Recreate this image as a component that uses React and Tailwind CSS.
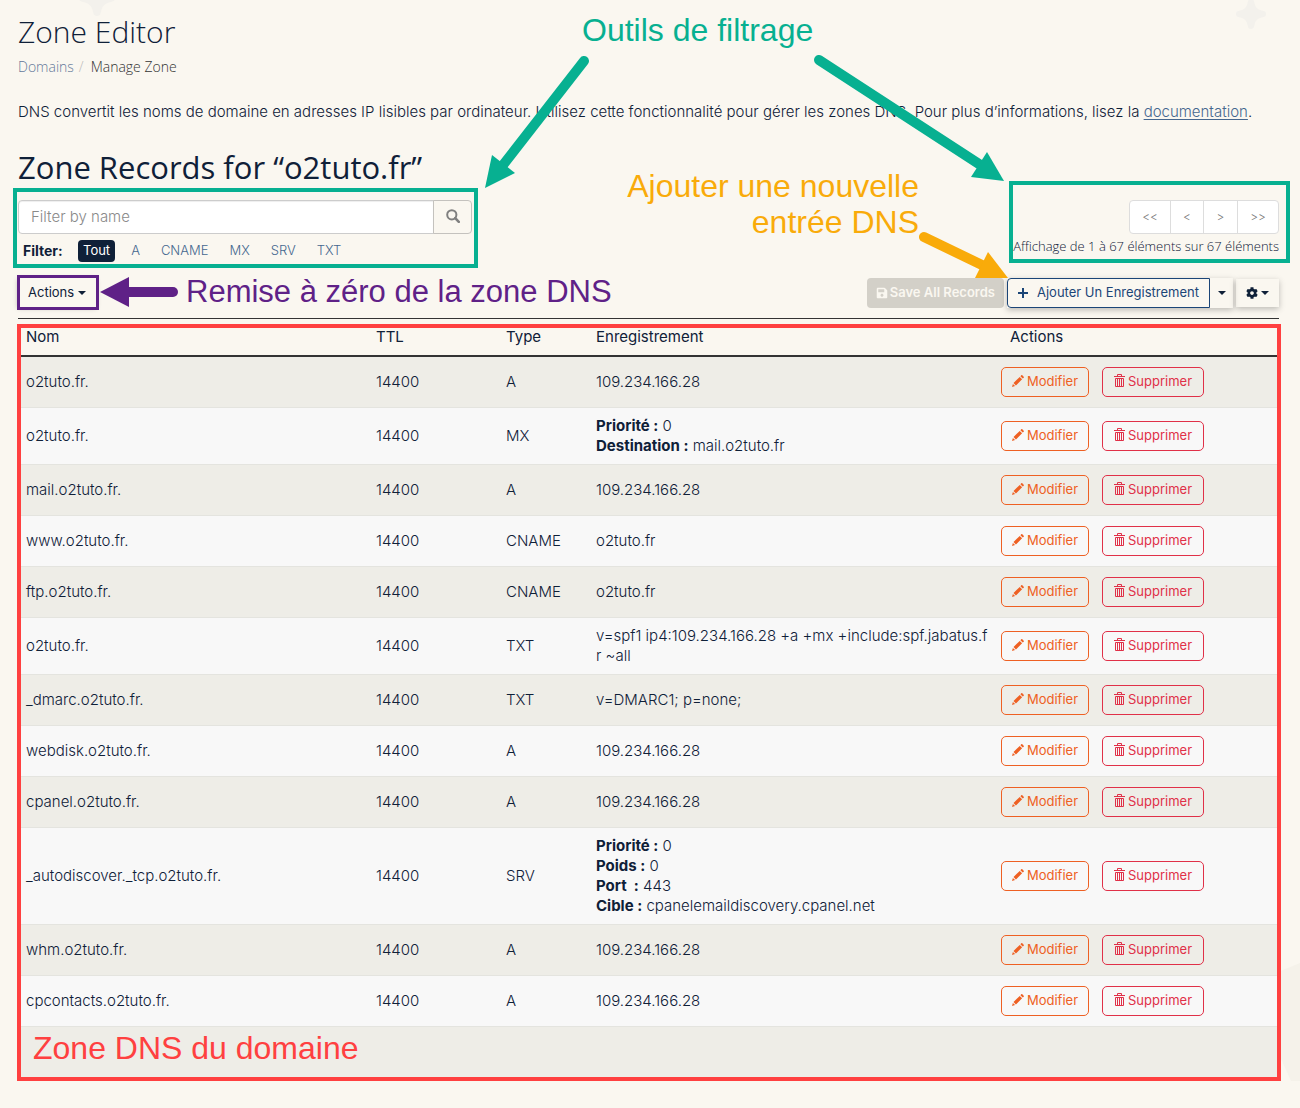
import { FaCog, FaSave } from "react-icons/fa";

const RECORDS = [
  { name: "o2tuto.fr.", type: "A", value: "109.234.166.28" },
  {
    name: "o2tuto.fr.",
    type: "MX",
    fields: [
      ["Priorité :", "0"],
      ["Destination :", "mail.o2tuto.fr"],
    ],
  },
  { name: "mail.o2tuto.fr.", type: "A", value: "109.234.166.28" },
  { name: "www.o2tuto.fr.", type: "CNAME", value: "o2tuto.fr" },
  { name: "ftp.o2tuto.fr.", type: "CNAME", value: "o2tuto.fr" },
  {
    name: "o2tuto.fr.",
    type: "TXT",
    lines: ["v=spf1 ip4:109.234.166.28 +a +mx +include:spf.jabatus.f", "r ~all"],
  },
  { name: "_dmarc.o2tuto.fr.", type: "TXT", value: "v=DMARC1; p=none;" },
  { name: "webdisk.o2tuto.fr.", type: "A", value: "109.234.166.28" },
  { name: "cpanel.o2tuto.fr.", type: "A", value: "109.234.166.28" },
  {
    name: "_autodiscover._tcp.o2tuto.fr.",
    type: "SRV",
    fields: [
      ["Priorité :", "0"],
      ["Poids :", "0"],
      ["Port\u00a0 :", "443"],
      ["Cible :", "cpanelemaildiscovery.cpanel.net"],
    ],
  },
  { name: "whm.o2tuto.fr.", type: "A", value: "109.234.166.28" },
  { name: "cpcontacts.o2tuto.fr.", type: "A", value: "109.234.166.28" },
];

const Caret = () => (
  <svg className="h-1 w-2" viewBox="0 0 8 4" fill="currentColor" aria-hidden="true">
    <path d="M0 0h8L4 4z" />
  </svg>
);

const PencilIcon = () => (
  <svg className="h-3 w-3" viewBox="0 0 12 12" fill="currentColor" aria-hidden="true">
    <path d="M0 12l.9-3.1 2.2 2.200zM1.500 8.100l6.200-6.200 2.400 2.400-6.200 6.200zM8.400 1.200L9.300.300c.3-.3.7-.3 1 0l1.400 1.400c.3.3.3.7 0 1L10.800 3.600z" />
  </svg>
);

const TrashIcon = () => (
  <svg className="mb-0.5 h-[13px] w-[11px]" viewBox="0 0 11 13" fill="none" stroke="currentColor" aria-hidden="true">
    <path d="M3.5 2.5v-2h4v2M0 2.5h11M1.5 4.5v8h8v-8z" />
    <path d="M3.5 4.5v8M5.5 4.5v8M7.5 4.5v8" />
  </svg>
);

const SearchIcon = () => (
  <svg className="h-[14px] w-[14px]" viewBox="0 0 14 14" fill="none" stroke="currentColor" aria-hidden="true">
    <circle cx="5.8" cy="5.8" r="4.6" strokeWidth="2" />
    <path d="M9.2 9.2l3.6 3.6" strokeWidth="2.6" strokeLinecap="round" />
  </svg>
);

const PlusIcon = () => (
  <svg className="h-[10px] w-[10px]" viewBox="0 0 10 10" fill="none" stroke="currentColor" strokeWidth="2" aria-hidden="true">
    <path d="M5 0v10M0 5h10" />
  </svg>
);

const Star = ({ className }) => (
  <svg className={className} viewBox="-16 -16 32 32" fill="#f3f1ec" aria-hidden="true">
    <path d="M0-16c2 0 3 1 3.500 3.500C4.500-7 7-4.500 12.500-3.500 15-3 16-2 16 0s-1 3-3.500 3.500C7 4.500 4.500 7 3.500 12.500 3 15 2 16 0 16s-3-1-3.500-3.500C-4.500 7-7 4.500-12.500 3.500-15 3-16 2-16 0s1-3 3.500-3.500C-7-4.500-4.500-7-3.500-12.500-3-15-2-16 0-16z" />
  </svg>
);

function RecordValue({ record }) {
  if (record.fields) {
    return record.fields.map(([label, value]) => (
      <div key={label}>
        <strong className="font-bold">{label}</strong> {value}
      </div>
    ));
  }
  if (record.lines) {
    return record.lines.map((line) => (
      <div key={line} className="whitespace-nowrap">
        {line}
      </div>
    ));
  }
  return record.value;
}

function FilterBar() {
  return (
    <div className="relative w-[454px]">
      <div className="flex h-[34px]">
        <input
          type="text"
          aria-label="Filter by name"
          placeholder="Filter by name"
          className="min-w-0 flex-1 rounded-l border border-[#cccccc] bg-white px-3 text-[15px] font-light shadow-[inset_0_1px_1px_rgba(0,0,0,0.07)] outline-none placeholder:text-[#8a8a8a]"
        />
        <button
          type="button"
          aria-label="Search"
          className="-ml-px flex w-[39px] items-center justify-center rounded-r border border-[#c4c2be] pb-0.5 text-[#808080]"
        >
          <SearchIcon />
        </button>
      </div>
      <div className="mt-1.5 flex h-[22px] items-center pl-[5px] text-[13px] font-light text-[#45678f]">
        <span className="w-[55px] text-sm font-bold text-[#0f2038]">Filter:</span>
        <div className="flex gap-[11px]">
          <button type="button" className="h-[22px] rounded bg-[#0f2038] px-[5px] font-normal text-white">
            Tout
          </button>
          {["A", "CNAME", "MX", "SRV", "TXT"].map((type) => (
            <button key={type} type="button" className="h-[22px] px-[5px]">
              {type}
            </button>
          ))}
        </div>
      </div>
      <div className="pointer-events-none absolute -top-3 -right-1.5 -bottom-1.5 -left-[5px] border-4 border-[#07b091]" />
    </div>
  );
}

function Pagination() {
  return (
    <div className="relative flex flex-col items-end">
      <nav
        aria-label="Pagination"
        className="flex h-[34px] divide-x divide-[#dddddd] overflow-hidden rounded border border-[#dddddd] bg-white text-xs font-light text-[#777777]"
      >
        <button type="button" className="w-[41px]">&lt;&lt;</button>
        <button type="button" className="w-[33px]">&lt;</button>
        <button type="button" className="w-[34px]">&gt;</button>
        <button type="button" className="w-10">&gt;&gt;</button>
      </nav>
      <p className="mt-0.5 font-['Open_Sans',sans-serif] text-[13px] leading-5 font-light whitespace-nowrap">
        Affichage de 1 à 67 éléments sur 67 éléments
      </p>
      <div className="pointer-events-none absolute -top-[19px] -right-[11px] -bottom-[7px] -left-1 border-4 border-[#07b091]" />
    </div>
  );
}

function Toolbar() {
  return (
    <div className="mt-4 flex items-start justify-between text-[13px]">
      <div className="relative">
        <button
          type="button"
          className="flex h-[29px] items-center gap-1 px-2.5 shadow-[0_1px_5px_rgba(0,0,0,0.3)]"
        >
          Actions <Caret />
        </button>
        <div className="pointer-events-none absolute -top-[3px] -right-[3px] -bottom-[3px] -left-px border-[3px] border-[#5f2187]" />
      </div>
      <div className="flex items-center gap-[3px]">
        <button
          type="button"
          disabled
          className="flex h-[30px] items-center gap-0.5 rounded bg-[#d3d0c8] px-[9px] font-semibold text-[#faf7f0]"
        >
          <FaSave className="h-3 w-3" />
          Save All Records
        </button>
        <div className="flex h-[30px] shadow-[0_2px_6px_rgba(0,0,0,0.25)]">
          <button
            type="button"
            className="flex items-center gap-[9px] rounded-l border border-[#1b4577] px-2.5 text-[#1b4577]"
          >
            <PlusIcon />
            Ajouter Un Enregistrement
          </button>
          <button type="button" aria-label="More options" className="flex w-[23px] items-center justify-center">
            <Caret />
          </button>
        </div>
        <button
          type="button"
          aria-label="Settings"
          className="flex h-7 w-[43px] items-center justify-center gap-[3px] shadow-[0_2px_6px_rgba(0,0,0,0.25)]"
        >
          <FaCog className="h-3 w-3" />
          <Caret />
        </button>
      </div>
    </div>
  );
}

function RecordsTable() {
  return (
    <div className="relative mt-2.5 border-t border-[#333333]">
      <table className="w-full table-fixed border-separate border-spacing-0 text-left leading-5">
        <colgroup>
          <col className="w-[350px]" />
          <col className="w-[130px]" />
          <col className="w-[90px]" />
          <col />
          <col className="w-[286px]" />
        </colgroup>
        <thead>
          <tr className="[&>th]:border-b-2 [&>th]:border-[#333333] [&>th]:p-2 [&>th]:font-normal">
            <th>Nom</th>
            <th>TTL</th>
            <th>Type</th>
            <th>Enregistrement</th>
            <th>
              <span className="pl-[9px]">Actions</span>
            </th>
          </tr>
        </thead>
        <tbody className="font-light">
          {RECORDS.map((record, i) => (
            <tr
              key={i}
              className="odd:bg-[#eeede7] even:bg-[#f8f8f8] [&>td]:border-b [&>td]:border-[#e4e4df] [&>td]:p-2"
            >
              <td>{record.name}</td>
              <td>14400</td>
              <td>{record.type}</td>
              <td>
                <RecordValue record={record} />
              </td>
              <td>
                <div className="flex h-[34px] items-center gap-[13px] text-[13px] font-normal">
                  <button
                    type="button"
                    className="flex h-[30px] w-[88px] items-center justify-center gap-[3px] rounded-[5px] border border-[#ee6023] pb-0.5 text-[#ee6023]"
                  >
                    <PencilIcon />
                    Modifier
                  </button>
                  <button
                    type="button"
                    className="flex h-[30px] w-[102px] items-center justify-center gap-[3px] rounded-[5px] border border-[#e03048] pb-0.5 text-[#e03048]"
                  >
                    <TrashIcon />
                    Supprimer
                  </button>
                </div>
              </td>
            </tr>
          ))}
          <tr className="bg-[#eeede7]">
            <td colSpan={5} className="h-[51px]" />
          </tr>
        </tbody>
      </table>
      <div className="pointer-events-none absolute top-[5px] -right-0.5 -bottom-[3px] -left-px border-4 border-[#ff4040]" />
      <p className="absolute bottom-3 left-[15px] font-['Liberation_Sans',sans-serif] text-[32px] leading-9 text-[#ff4040]">
        Zone DNS du domaine
      </p>
    </div>
  );
}

function Callouts() {
  return (
    <div className="pointer-events-none absolute inset-0 font-['Liberation_Sans',sans-serif] text-[32px] leading-9">
      <p className="absolute top-3 left-[582px] whitespace-nowrap text-[#07b091]">Outils de filtrage</p>
      <p className="absolute top-[168px] right-[381px] text-right whitespace-nowrap text-[#f9ab0a]">
        Ajouter une nouvelle
        <br />
        entrée DNS
      </p>
      <p className="absolute top-[274px] left-[186px] text-[31px] whitespace-nowrap text-[#5f2187]">
        Remise à zéro de la zone DNS
      </p>
      <svg className="absolute top-0 left-0 h-[320px] w-[620px]" viewBox="0 0 620 320" aria-hidden="true">
        <path d="M584 61L503 165" stroke="#07b091" strokeWidth="10" strokeLinecap="round" />
        <path d="M485 188l7-33 23 18z" fill="#07b091" />
        <path d="M173 292h-46" stroke="#5f2187" strokeWidth="10" strokeLinecap="round" />
        <path d="M100 292l29-15v30z" fill="#5f2187" />
      </svg>
      <svg className="absolute top-0 right-0 h-[320px] w-[500px]" viewBox="800 0 500 320" aria-hidden="true">
        <path d="M819 60l160 104" stroke="#07b091" strokeWidth="10" strokeLinecap="round" />
        <path d="M1004 181l-17-29-16 25z" fill="#07b091" />
        <path d="M924 237l58 28" stroke="#f9ab0a" strokeWidth="10" strokeLinecap="round" />
        <path d="M1008 278l-20-26-13 26z" fill="#f9ab0a" />
      </svg>
    </div>
  );
}

export default function App() {
  return (
    <div className="relative min-h-screen overflow-hidden bg-[#faf7f0] font-[Inter,sans-serif] text-[15px] text-[#0f2038]">
      <Star className="absolute -top-5 left-[79px] h-9 w-9" />
      <Star className="absolute -top-px right-[34px] h-[30px] w-[30px]" />
      <svg className="absolute top-[960px] right-0 h-[121px] w-[22px]" viewBox="0 0 22 121" fill="#f5f2ea" aria-hidden="true">
        <path d="M22 3L0 12v80l13 29h9z" />
      </svg>

      <main className="relative pt-[15px] pr-[21px] pb-[30px] pl-[18px]">
        <h1 className="font-['Open_Sans',sans-serif] text-[30px] leading-[33px] font-light">Zone Editor</h1>
        <nav aria-label="Breadcrumb" className="mt-[9px] flex font-['Open_Sans',sans-serif] text-sm leading-5 font-light">
          <a href="#domains" className="text-[#64799a]">Domains</a>
          <span className="px-[5px] text-[#bbbbbb]">/</span>
          <span className="ml-0.5 text-[#333333]">Manage Zone</span>
        </nav>
        <p className="mt-[25px] leading-5 font-light">
          DNS convertit les noms de domaine en adresses IP lisibles par ordinateur. Utilisez cette fonctionnalité pour
          gérer les zones DNS. Pour plus d’informations, lisez la{" "}
          <a href="#documentation" className="text-[#45678f] underline underline-offset-2">documentation</a>.
        </p>
        <h2 className="mt-7 font-['Open_Sans',sans-serif] text-[31px] leading-[34px]">
          Zone Records for “o2tuto.fr”
        </h2>
        <div className="mt-4 flex items-start justify-between">
          <FilterBar />
          <Pagination />
        </div>
        <Toolbar />
        <RecordsTable />
      </main>
      <Callouts />
    </div>
  );
}
